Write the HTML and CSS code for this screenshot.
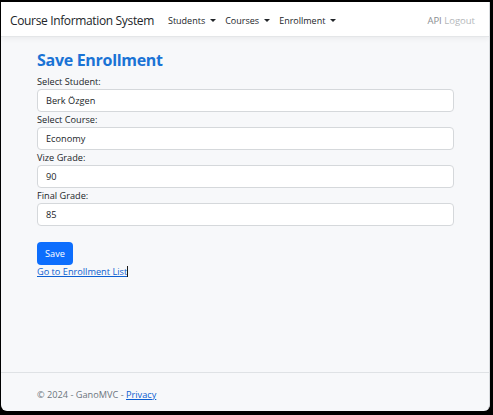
FILE: index.html
```html
<!DOCTYPE html>
<html lang="en">
<head>
<meta charset="utf-8">
<title>Save Enrollment - GanoMVC</title>
<link rel="stylesheet" href="styles.css">
</head>
<body>
<div class="window">
  <nav class="navbar">
    <span class="brand">Course Information System</span>
    <ul class="nav-list">
      <li class="nav-item">Students <span class="caret"></span></li>
      <li class="nav-item">Courses <span class="caret"></span></li>
      <li class="nav-item">Enrollment <span class="caret"></span></li>
    </ul>
    <div class="nav-right">
      <span class="api">API</span> <span class="logout">Logout</span>
    </div>
  </nav>
  <main class="main">
    <h2 class="title">Save Enrollment</h2>
    <form class="form">
      <div class="group">
        <label class="label">Select Student:</label>
        <div class="input">Berk Özgen</div>
      </div>
      <div class="group">
        <label class="label">Select Course:</label>
        <div class="input">Economy</div>
      </div>
      <div class="group">
        <label class="label">Vize Grade:</label>
        <div class="input">90</div>
      </div>
      <div class="group">
        <label class="label">Final Grade:</label>
        <div class="input">85</div>
      </div>
      <button type="button" class="btn">Save</button>
      <a class="back-link" href="#">Go to Enrollment List</a><span class="cursor"></span>
    </form>
  </main>
  <footer class="footer">
    © 2024 - GanoMVC - <a class="footer-link" href="#">Privacy</a>
  </footer>
</div>
</body>
</html>
```

FILE: styles.css
```css
* { box-sizing: border-box; }
html, body { margin: 0; padding: 0; }
body {
  background: #000;
  font-family: "Open Sans", "Noto Sans", sans-serif;
  color: #212529;
  width: 493px;
  height: 415px;
  overflow: hidden;
}
.window {
  margin: 2px 3px 0 1px;
  height: 409px;
  background: #f7f8fa;
  border-radius: 0 0 6px 6px;
  display: flex;
  flex-direction: column;
  overflow: hidden;
  border-right: 1px solid #d9dcdf;
}
.navbar {
  height: 35px;
  flex: 0 0 35px;
  background: #fff;
  display: flex;
  align-items: center;
  padding-left: 9px;
  padding-right: 14px;
  padding-top: 3px;
  border-bottom: 1px solid #e4e6e8;
  box-shadow: 0 2px 5px rgba(0,0,0,0.05);
}
.brand {
  font-size: 12px;
  letter-spacing: -0.35px;
  color: #212529;
  margin-right: 14px;
}
.nav-list {
  display: flex;
  list-style: none;
  margin: 0;
  padding: 0;
  gap: 9px;
  font-size: 9px;
}
.nav-item { color: #212529; display: flex; align-items: center; }
.caret {
  display: inline-block;
  margin-left: 5px;
  width: 0; height: 0;
  border-left: 3px solid transparent;
  border-right: 3px solid transparent;
  border-top: 3px solid #212529;
}
.nav-right { margin-left: auto; font-size: 9.5px; }
.api { color: #8a8d90; }
.logout { color: #b4b7ba; }
.main {
  flex: 1;
  padding: 12px 35px 0 36px;
}
.title {
  margin: 0 0 4px;
  font-size: 16px;
  letter-spacing: -0.3px;
  line-height: 22px;
  font-weight: 700;
  color: #1a73d5;
}
.form {
  display: block;
  font-size: 9.2px;
  line-height: 14px;
}
.group { margin-bottom: 1px; }
.label {
  display: block;
  font-size: 9.2px;
  line-height: 14px;
  color: #212529;
}
.input {
  height: 23px;
  background: #fff;
  border: 1px solid #d5d8db;
  border-radius: 4px;
  padding: 0 8px;
  font-size: 9.2px;
  line-height: 21px;
  color: #212529;
}
.btn {
  display: block;
  margin-top: 16px;
  width: 36px;
  height: 23px;
  padding: 0;
  background: #0d6efd;
  border: none;
  border-radius: 4px;
  color: #fff;
  font-family: inherit;
  font-size: 9.2px;
}
.back-link {
  font-size: 9.2px;
  line-height: 14px;
  color: #0d5fd1;
  text-decoration: underline;
}
.cursor {
  display: inline-block;
  width: 1px;
  height: 11px;
  background: #1a1a1a;
  vertical-align: -2px;
}
.footer {
  flex: 0 0 39px;
  border-top: 1px solid #dfe2e5;
  padding-left: 36px;
  padding-top: 15px;
  font-size: 9.2px;
  color: #6c757d;
}
.footer-link { color: #0d5fd1; text-decoration: underline; }
```
